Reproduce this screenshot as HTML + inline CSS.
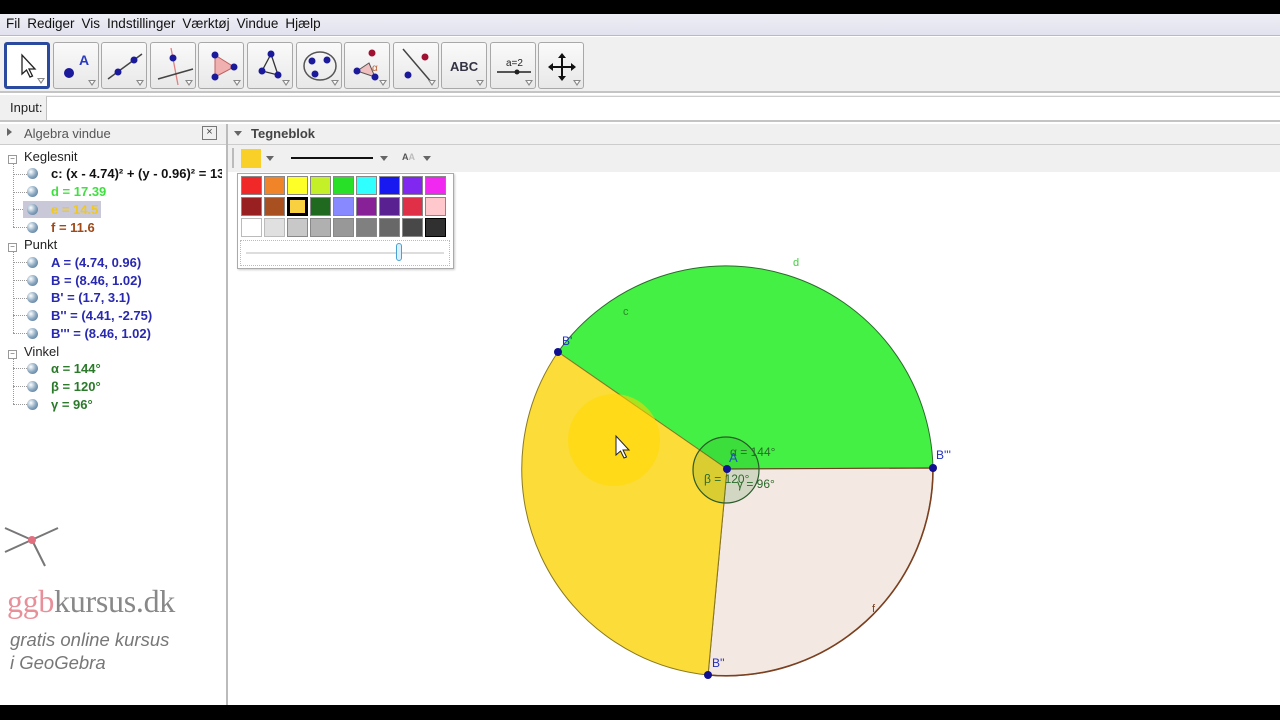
<!DOCTYPE html>
<html><head><meta charset="utf-8"><style>
*{margin:0;padding:0;box-sizing:border-box}
body{width:1280px;height:720px;overflow:hidden;background:#fff;font-family:"Liberation Sans",sans-serif;position:relative}
.a{position:absolute}
.menu span{margin-right:7px}
.btn{position:absolute;top:42px;width:46px;height:47px;border:1px solid #a8a8a8;border-radius:3px;background:linear-gradient(#fafafa,#e8e8e8)}
.btn svg{position:absolute;left:0;top:0}
.tri{position:absolute;right:2px;bottom:2px;width:0;height:0;border-left:4px solid transparent;border-right:4px solid transparent;border-top:6px solid #888}
.tri:after{content:"";position:absolute;left:-2px;top:-5px;border-left:2px solid transparent;border-right:2px solid transparent;border-top:3px solid #fff}
.tree div{position:absolute;font-size:13px;font-weight:bold;white-space:nowrap}
.tree .h{font-weight:normal;color:#222;font-size:13px}
.ball{display:inline-block;width:11px;height:11px;border-radius:50%;background:radial-gradient(circle at 35% 35%,#fff,#8aa8c0 50%,#4a6a88);vertical-align:-1px;margin-right:13px}
.cell{position:absolute;width:21px;height:19px;border:1px solid #888}
.vl{position:absolute;left:13px;width:0;border-left:1px dotted #999}
.hl{position:absolute;left:13px;width:14px;height:0;border-top:1px dotted #999}
</style></head><body>
<div class="a" style="left:0;top:0;width:1280px;height:14px;background:#000"></div>
<div class="a menu" style="left:0;top:14px;width:1280px;height:22px;background:linear-gradient(#eeeef6,#e2e2ee);border-bottom:1px solid #b8b8c8;font-size:13.5px;color:#111;padding:1px 0 0 6px;line-height:18px">
<span>Fil</span><span>Rediger</span><span>Vis</span><span>Indstillinger</span><span>Værktøj</span><span>Vindue</span><span>Hjælp</span></div>
<div class="a" style="left:0;top:37px;width:1280px;height:56px;background:#f0f0f0;border-bottom:2px solid #c4c4c4"></div>

<div class="btn" style="left:4px;border:3px solid #2a4aa0;background:#fff"><svg width="40" height="41"><path d="M15 10 L15 29 L19.5 25 L23 32 L25.5 31 L22 24 L28 24 Z" fill="#fff" stroke="#222" stroke-width="1.3"/></svg><div class="tri"></div></div>
<div class="btn" style="left:53px"><svg width="46" height="47"><circle cx="15" cy="30" r="5" fill="#1a1a9a"/><text x="25" y="22" font-size="14" font-weight="bold" fill="#2a3ac0" font-family="Liberation Sans">A</text></svg><div class="tri"></div></div>
<div class="btn" style="left:101px"><svg width="46" height="47"><line x1="6" y1="36" x2="40" y2="11" stroke="#444" stroke-width="1.5"/><circle cx="16" cy="29" r="3.5" fill="#1a1a9a"/><circle cx="32" cy="17" r="3.5" fill="#1a1a9a"/></svg><div class="tri"></div></div>
<div class="btn" style="left:150px"><svg width="46" height="47"><line x1="20" y1="5" x2="27" y2="42" stroke="#e08080" stroke-width="1.3"/><line x1="7" y1="36" x2="42" y2="26" stroke="#444" stroke-width="1.5"/><circle cx="22" cy="15" r="3.5" fill="#1a1a9a"/></svg><div class="tri"></div></div>
<div class="btn" style="left:198px"><svg width="46" height="47"><path d="M16 12 L35 24 L16 34 Z" fill="#f0b0b0" stroke="#c06060"/><circle cx="16" cy="12" r="3.5" fill="#1a1a9a"/><circle cx="35" cy="24" r="3.5" fill="#1a1a9a"/><circle cx="16" cy="34" r="3.5" fill="#1a1a9a"/></svg><div class="tri"></div></div>
<div class="btn" style="left:247px"><svg width="46" height="47"><path d="M23 11 L14 28 L30 32 Z" fill="none" stroke="#333" stroke-width="1.3"/><circle cx="23" cy="11" r="3.5" fill="#1a1a9a"/><circle cx="14" cy="28" r="3.5" fill="#1a1a9a"/><circle cx="30" cy="32" r="3.5" fill="#1a1a9a"/></svg><div class="tri"></div></div>
<div class="btn" style="left:296px"><svg width="46" height="47"><ellipse cx="23" cy="23" rx="16" ry="14" fill="none" stroke="#555" stroke-width="1.5"/><circle cx="15" cy="18" r="3.5" fill="#1a1a9a"/><circle cx="30" cy="17" r="3.5" fill="#1a1a9a"/><circle cx="18" cy="31" r="3.5" fill="#1a1a9a"/></svg><div class="tri"></div></div>
<div class="btn" style="left:344px"><svg width="46" height="47"><path d="M12 28 L24 20 L30 34 Z" fill="#f0c0c0" stroke="#555"/><circle cx="12" cy="28" r="3.5" fill="#1a1a9a"/><circle cx="30" cy="34" r="3.5" fill="#1a1a9a"/><circle cx="27" cy="10" r="3.5" fill="#a01030"/><text x="27" y="28" font-size="10" fill="#c06030">α</text></svg><div class="tri"></div></div>
<div class="btn" style="left:393px"><svg width="46" height="47"><line x1="9" y1="6" x2="38" y2="40" stroke="#444" stroke-width="1.5"/><circle cx="31" cy="14" r="3.5" fill="#a01030"/><circle cx="14" cy="32" r="3.5" fill="#1a1a9a"/></svg><div class="tri"></div></div>
<div class="btn" style="left:441px"><svg width="46" height="47"><text x="8" y="28" font-size="13" font-weight="bold" fill="#334" font-family="Liberation Sans">ABC</text></svg><div class="tri"></div></div>
<div class="btn" style="left:490px"><svg width="46" height="47"><text x="15" y="23" font-size="10" fill="#222" font-family="Liberation Sans">a=2</text><line x1="6" y1="29" x2="40" y2="29" stroke="#222" stroke-width="1.5"/><circle cx="26" cy="29" r="2.5" fill="#222"/></svg><div class="tri"></div></div>
<div class="btn" style="left:538px"><svg width="46" height="47"><path d="M23 13 V35 M12 24 H34" stroke="#111" stroke-width="2"/><path d="M23 10 L19 15 H27Z M23 38 L19 33 H27Z M9 24 L14 20 V28Z M37 24 L32 20 V28Z" fill="#111"/></svg><div class="tri"></div></div>

<div class="a" style="left:0;top:95px;width:1280px;height:27px;background:#f0f0f0;border-bottom:2px solid #c4c4c4"></div>
<div class="a" style="left:10px;top:100px;font-size:13px;color:#222">Input:</div>
<div class="a" style="left:46px;top:96px;width:1234px;height:24px;background:#fff;border-left:1px solid #c0c0c0;border-top:1px solid #ccc"></div>

<div class="a" style="left:0;top:124px;width:1280px;height:21px;background:#f0f0f0;border-bottom:1px solid #ccc"></div>
<div class="a" style="left:7px;top:128px;width:0;height:0;border-top:4px solid transparent;border-bottom:4px solid transparent;border-left:5px solid #666"></div>
<div class="a" style="left:24px;top:126px;font-size:13px;color:#555">Algebra vindue</div>
<div class="a" style="left:202px;top:126px;width:15px;height:14px;border:1px solid #777;font-size:11px;line-height:11px;text-align:center;color:#444">×</div>
<div class="a" style="left:226px;top:124px;width:2px;height:581px;background:#bbb"></div>
<div class="a" style="left:234px;top:131px;width:0;height:0;border-left:4px solid transparent;border-right:4px solid transparent;border-top:5px solid #666"></div>
<div class="a" style="left:251px;top:126px;font-size:13px;font-weight:bold;color:#444">Tegneblok</div>
<div class="a" style="left:228px;top:145px;width:1052px;height:27px;background:#f0f0f0"></div>
<div class="a" style="left:232px;top:148px;width:2px;height:20px;background:#bbb"></div>
<div class="a" style="left:241px;top:149px;width:20px;height:19px;background:#f8d028"></div>
<div class="a" style="left:266px;top:156px;border-left:4px solid transparent;border-right:4px solid transparent;border-top:5px solid #666"></div>
<div class="a" style="left:291px;top:157px;width:82px;height:2px;background:#111"></div>
<div class="a" style="left:380px;top:156px;border-left:4px solid transparent;border-right:4px solid transparent;border-top:5px solid #666"></div>
<div class="a" style="left:402px;top:152px;font-size:9px;color:#555;font-weight:bold">A<span style="color:#bbb">A</span></div>
<div class="a" style="left:423px;top:156px;border-left:4px solid transparent;border-right:4px solid transparent;border-top:5px solid #666"></div>

<div class="vl" style="top:162px;height:65px"></div>
<div class="hl" style="top:174px"></div><div class="hl" style="top:192px"></div><div class="hl" style="top:209px"></div><div class="hl" style="top:227px"></div>
<div class="vl" style="top:251px;height:82px"></div>
<div class="hl" style="top:262px"></div><div class="hl" style="top:280px"></div><div class="hl" style="top:298px"></div><div class="hl" style="top:315px"></div><div class="hl" style="top:333px"></div>
<div class="vl" style="top:357px;height:47px"></div>
<div class="hl" style="top:368px"></div><div class="hl" style="top:386px"></div><div class="hl" style="top:404px"></div>

<div class="tree">
<div class="h" style="left:8px;top:149px"><span style="display:inline-block;width:9px;height:9px;border:1px solid #999;background:#fff;font-size:8px;line-height:6px;text-align:center;color:#555;margin-right:7px">−</span>Keglesnit</div>
<div style="left:27px;top:166px;color:#111"><span class="ball"></span>c: (x - 4.74)² + (y - 0.96)² = 13</div>
<div style="left:27px;top:184px;color:#40e040"><span class="ball"></span>d = 17.39</div>
<div class="a" style="left:23px;top:201px;width:78px;height:17px;background:#c8c8d8"></div>
<div style="left:27px;top:202px;color:#f0c820"><span class="ball"></span>e = 14.5</div>
<div style="left:27px;top:220px;color:#a04818"><span class="ball"></span>f = 11.6</div>
<div class="h" style="left:8px;top:237px"><span style="display:inline-block;width:9px;height:9px;border:1px solid #999;background:#fff;font-size:8px;line-height:6px;text-align:center;color:#555;margin-right:7px">−</span>Punkt</div>
<div style="left:27px;top:255px;color:#2828b0"><span class="ball"></span>A = (4.74, 0.96)</div>
<div style="left:27px;top:273px;color:#2828b0"><span class="ball"></span>B = (8.46, 1.02)</div>
<div style="left:27px;top:290px;color:#2828b0"><span class="ball"></span>B' = (1.7, 3.1)</div>
<div style="left:27px;top:308px;color:#2828b0"><span class="ball"></span>B'' = (4.41, -2.75)</div>
<div style="left:27px;top:326px;color:#2828b0"><span class="ball"></span>B''' = (8.46, 1.02)</div>
<div class="h" style="left:8px;top:344px"><span style="display:inline-block;width:9px;height:9px;border:1px solid #999;background:#fff;font-size:8px;line-height:6px;text-align:center;color:#555;margin-right:7px">−</span>Vinkel</div>
<div style="left:27px;top:361px;color:#2a7a2a"><span class="ball"></span>α = 144°</div>
<div style="left:27px;top:379px;color:#2a7a2a"><span class="ball"></span>β = 120°</div>
<div style="left:27px;top:397px;color:#2a7a2a"><span class="ball"></span>γ = 96°</div>
</div>
<div class="a" style="left:222px;top:160px;width:4px;height:24px;background:#fff"></div>

<svg class="a" style="left:0;top:510px" width="70" height="70"><line x1="5" y1="18" x2="32" y2="30" stroke="#777" stroke-width="2"/><line x1="5" y1="42" x2="58" y2="18" stroke="#777" stroke-width="2"/><line x1="32" y1="30" x2="45" y2="56" stroke="#777" stroke-width="2"/><circle cx="32" cy="30" r="4" fill="#e07080"/></svg>
<div class="a" style="left:7px;top:583px;font-family:'Liberation Serif',serif;font-size:32px;color:#888;letter-spacing:-0.3px"><span style="color:#e8909a">ggb</span>kursus.dk</div>
<div class="a" style="left:10px;top:628px;font-size:18.5px;font-style:italic;color:#777;line-height:23px">gratis online kursus<br>i GeoGebra</div>

<svg class="a" style="left:228px;top:172px" width="1052" height="533">
<g transform="translate(-228,-172)">
<path d="M727 469 L558 352 A207 207 0 0 1 933 468 Z" fill="#44f044" stroke="#2a6a2a" stroke-width="1"/>
<path d="M727 469 L933 468 A207 207 0 0 1 708 675 Z" fill="#f4e8e2" stroke="#6a4020" stroke-width="1.2"/>
<path d="M727 469 L708 675 A207 207 0 0 1 558 352 Z" fill="#fcdc38" stroke="#8a7a20" stroke-width="1"/>
<path d="M933 468 A207 207 0 0 1 708 675" fill="none" stroke="#7a4020" stroke-width="1.6"/>
<circle cx="614" cy="440" r="46" fill="#ffd800" opacity="0.55"/>
<circle cx="726" cy="470" r="33" fill="rgba(20,120,20,0.15)" stroke="#2a5a2a" stroke-width="1.2"/>
<path d="M616 436 L616 455 L620.5 451 L624 458 L626.5 457 L623 450 L629 450 Z" fill="#fff" stroke="#222" stroke-width="1"/>
<circle cx="727" cy="469" r="4" fill="#101090"/>
<circle cx="558" cy="352" r="4" fill="#101090"/>
<circle cx="933" cy="468" r="4" fill="#101090"/>
<circle cx="708" cy="675" r="4" fill="#101090"/>
<g font-family="Liberation Sans" font-size="12">
<text x="562" y="345" fill="#2030c0">B'</text>
<text x="936" y="459" fill="#2030c0">B'''</text>
<text x="712" y="667" fill="#2030c0">B''</text>
<text x="729" y="462" fill="#2050c0" font-size="13">A</text>
<text x="730" y="456" fill="#2a6a2a">α = 144°</text>
<text x="704" y="483" fill="#2a6a2a">β = 120°</text>
<text x="737" y="488" fill="#2a6a2a">γ = 96°</text>
<text x="793" y="266" fill="#40d040" font-size="11">d</text>
<text x="623" y="315" fill="#2a8a2a" font-size="11">c</text>
<text x="872" y="612" fill="#7a4020" font-size="11">f</text>
</g>
</g>
</svg>

<div class="a" style="left:237px;top:173px;width:217px;height:96px;background:#fff;border:1px solid #aaa;box-shadow:1px 1px 2px #ccc"></div>
<div class="a" style="left:240px;top:240px;width:210px;height:26px;border:1px dotted #bbb"></div>
<div class="a" style="left:246px;top:252px;width:198px;height:2px;background:#ddd"></div>
<div class="a" style="left:396px;top:243px;width:6px;height:18px;border:1px solid #4aa0d0;border-radius:3px;background:#d8f0ff"></div>
<div class="a" style="left:0;top:705px;width:1280px;height:15px;background:#000"></div>
<div>
<div class="cell" style="left:241px;top:176px;background:#f02828"></div>
<div class="cell" style="left:264px;top:176px;background:#f08428"></div>
<div class="cell" style="left:287px;top:176px;background:#ffff28"></div>
<div class="cell" style="left:310px;top:176px;background:#c4f028"></div>
<div class="cell" style="left:333px;top:176px;background:#28e028"></div>
<div class="cell" style="left:356px;top:176px;background:#30ffff"></div>
<div class="cell" style="left:379px;top:176px;background:#1818f0"></div>
<div class="cell" style="left:402px;top:176px;background:#8028f0"></div>
<div class="cell" style="left:425px;top:176px;background:#f028f0"></div>
<div class="cell" style="left:241px;top:197px;background:#982020"></div>
<div class="cell" style="left:264px;top:197px;background:#a85020"></div>
<div class="cell" style="left:287px;top:197px;background:#f8d040;border:3px solid #000"></div>
<div class="cell" style="left:310px;top:197px;background:#206a20"></div>
<div class="cell" style="left:333px;top:197px;background:#8888ff"></div>
<div class="cell" style="left:356px;top:197px;background:#882098"></div>
<div class="cell" style="left:379px;top:197px;background:#582090"></div>
<div class="cell" style="left:402px;top:197px;background:#e03048"></div>
<div class="cell" style="left:425px;top:197px;background:#ffc8cc"></div>
<div class="cell" style="left:241px;top:218px;background:#fff;border-color:#bbb"></div>
<div class="cell" style="left:264px;top:218px;background:#e0e0e0;border-color:#bbb"></div>
<div class="cell" style="left:287px;top:218px;background:#c8c8c8"></div>
<div class="cell" style="left:310px;top:218px;background:#b0b0b0"></div>
<div class="cell" style="left:333px;top:218px;background:#989898"></div>
<div class="cell" style="left:356px;top:218px;background:#808080"></div>
<div class="cell" style="left:379px;top:218px;background:#686868"></div>
<div class="cell" style="left:402px;top:218px;background:#484848"></div>
<div class="cell" style="left:425px;top:218px;background:#303030;border-color:#000"></div>
</div>
</body></html>
